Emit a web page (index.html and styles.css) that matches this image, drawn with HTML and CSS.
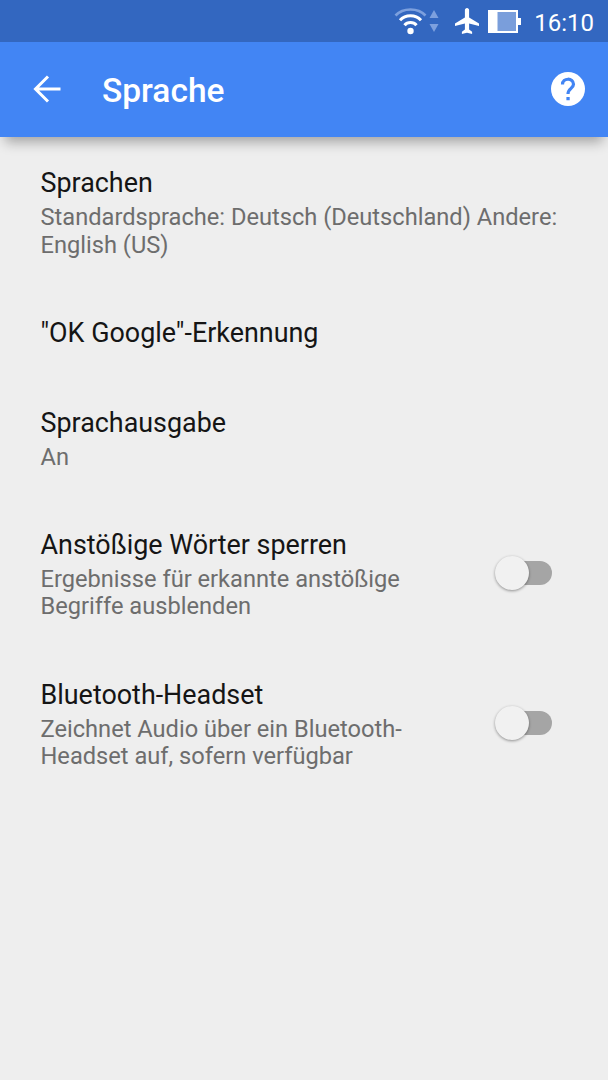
FILE: index.html
```html
<!DOCTYPE html>
<html lang="de">
<head>
    <meta charset="UTF-8">
    <meta name="viewport" content="width=device-width, initial-scale=1.0">
    <title>Sprache</title>
    <link rel="stylesheet" href="styles.css">
</head>
<body>
    <div class="status-bar">
        <svg class="wifi" width="46" height="28" viewBox="0 0 46 28" fill="none" stroke="#fff" stroke-width="3">
            <path d="M1.5 8.5C9 .5 24 .5 31.5 8.5" stroke="#7da0de" stroke-width="2.6"/>
            <path d="M6 13.3C11.5 7.2 21.5 7.2 27 13.3"/>
            <path d="M10.5 18.3C13.5 14.6 19.5 14.6 22.5 18.3"/>
            <circle cx="16.500" cy="24" r="3.200" fill="#fff" stroke="none"/>
            <path d="M35.500 11l4.500-8 4.500 8zM35.500 17l4.500 8 4.500-8z" fill="#7da0de" stroke="none"/>
        </svg>
        <svg class="plane" width="26" height="26" viewBox="0 0 26 26" fill="#fff">
            <path d="M13 0c1.200 0 2.100 1 2.100 2.200V9.500L25 15.500V18l-9.900-2.500v6.100l3 2.200V26L13 24.700 7.900 26v-2.200l3-2.200v-6.100L1 18v-2.500l9.900-6V2.200C10.900 1 11.800 0 13 0z"/>
        </svg>
        <svg class="battery" width="34" height="23" viewBox="0 0 34 23">
            <path d="M0 0h30v8h3v7h-3v8H0z" fill="#fff"/>
            <path d="M9.500 2h18.500v19H9.500z" fill="#7a9edb"/>
        </svg>
        <span class="clock">16:10</span>
    </div>

    <div class="toolbar">
        <svg class="back" width="28" height="28" viewBox="0 0 28 28" fill="none" stroke="#fff" stroke-width="3">
            <path d="M27.500 14H3M15 1.500L2.500 14 15 26.500"/>
        </svg>
        <h1>Sprache</h1>
        <svg class="help" width="34" height="34" viewBox="0 0 34 34">
            <circle cx="17" cy="17" r="17" fill="#fff"/>
            <path d="M11.500 12.500C11.500 5.500 22.500 5.500 22.500 12.300C22.500 16.500 17 16.500 17 22" fill="none" stroke="#4285f4" stroke-width="3.200"/>
            <path d="M15.400 25h3.300v3.300h-3.300z" fill="#4285f4"/>
        </svg>
    </div>

    <div class="settings">
        <div class="row">
            <div class="text">
                <h2>Sprachen</h2>
                <p>Standardsprache: Deutsch (Deutschland) Andere: English (US)</p>
            </div>
        </div>
        <div class="row">
            <div class="text">
                <h2>"OK Google"-Erkennung</h2>
            </div>
        </div>
        <div class="row">
            <div class="text">
                <h2>Sprachausgabe</h2>
                <p>An</p>
            </div>
        </div>
        <div class="row">
            <div class="text">
                <h2>Anstößige Wörter sperren</h2>
                <p>Ergebnisse für erkannte anstößige Begriffe ausblenden</p>
            </div>
            <div class="switch"><div class="thumb"></div></div>
        </div>
        <div class="row">
            <div class="text">
                <h2>Bluetooth-Headset</h2>
                <p>Zeichnet Audio über ein Bluetooth-Headset auf, sofern verfügbar</p>
            </div>
            <div class="switch"><div class="thumb"></div></div>
        </div>
    </div>
</body>
</html>
```

FILE: styles.css
```css
body {
    margin: 0;
    min-height: 1080px;
    background: #eee;
    font-family: Roboto, "Liberation Sans", sans-serif;
}
h1, h2, p {
    margin: 0;
}
svg {
    display: block;
    flex: none;
}
.status-bar {
    display: flex;
    align-items: center;
    justify-content: flex-end;
    height: 42px;
    padding-right: 14px;
    box-sizing: border-box;
    background: #3367c0;
    color: #fff;
}
.plane {
    margin-left: 14px;
}
.battery {
    margin-left: 8px;
}
.clock {
    margin: 3px 0 0 12px;
    font-size: 24px;
    line-height: 28px;
}
.toolbar {
    display: flex;
    align-items: center;
    height: 95px;
    padding: 0 23px 0 33px;
    box-sizing: border-box;
    background: #4285f4;
    color: #fff;
    box-shadow: 0 10px 12px -5px rgba(0, 0, 0, .32);
}
h1 {
    margin: 2px 0 0 41px;
    font-size: 33.5px;
    font-weight: 500;
    line-height: 40px;
}
.back {
    margin-bottom: 1px;
}
.help {
    margin: 0 0 1px auto;
}
.settings {
    padding-top: 1px;
}
.row {
    display: flex;
    align-items: center;
    padding: 29px 40px 28.7px 40.5px;
}
.text {
    flex: 1;
}
h2 {
    font-size: 26.9px;
    font-weight: 400;
    line-height: 32px;
    color: #151515;
}
p {
    margin-top: 5px;
    font-size: 23.65px;
    line-height: 27.6px;
    color: #6d6d6d;
}
.switch {
    width: 50px;
    height: 24px;
    margin: 0 16px 3px 60px;
    border-radius: 12px;
    background: #a5a5a5;
}
/* the thumb is taller than the track and hangs over its left end */
.thumb {
    width: 34px;
    height: 34px;
    margin-left: -7px;
    transform: translateY(-5px);
    border-radius: 50%;
    background: #f1f1f1;
    box-shadow: 0 1px 3px rgba(0, 0, 0, .4);
}
```
